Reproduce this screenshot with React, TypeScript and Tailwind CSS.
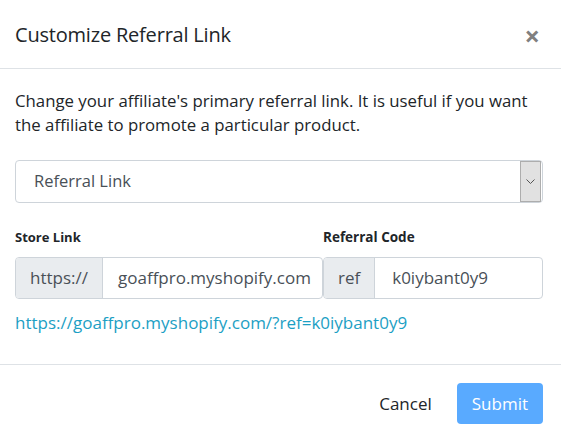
export default function App() {
  return (
    <div className="w-[561px] h-[442px] bg-white text-[#212529] font-['Open_Sans',sans-serif] overflow-hidden">
      {/* header */}
      <div className="flex items-center justify-between h-[69px] pl-[15px] pr-[21px] pt-[2px] border-b border-[#dee2e6]">
        <h5 className="text-[20px] leading-[30px] tracking-[-0.2px]">Customize Referral Link</h5>
        <button className="text-[27px] leading-none font-bold text-[#808080]">×</button>
      </div>

      {/* body */}
      <div className="pl-[15px] pr-[18px] pt-[20px] pb-[29px] border-b border-[#dee2e6]">
        <p className="text-[16.8px] leading-[24px] mb-[23px]">
          Change your affiliate's primary referral link. It is useful if you want the affiliate to promote a particular product.
        </p>

        <div className="flex items-center h-[43px] border border-[#ced4da] rounded-[4px] pl-[18px] pr-[1px]">
          <span className="flex-1 text-[16.5px] text-[#495057]">Referral Link</span>
          <div className="flex items-center justify-center w-[21px] h-[41px] bg-[#e1e1e1] border border-[#adadad]">
            <svg width="9" height="5" viewBox="0 0 9 5" fill="none" stroke="#555" strokeWidth="1">
              <path d="M0.5 0.5 L4.5 4.5 L8.5 0.5" />
            </svg>
          </div>
        </div>

        <div className="grid grid-cols-[308px_220px] mt-[24px]">
          <div>
            <label className="block text-[13px] font-bold leading-[21px] mb-[9px]">Store Link</label>
            <div className="flex h-[42px] border border-[#ced4da] rounded-[4px] overflow-hidden text-[17px]">
              <span className="flex items-center px-[14px] bg-[#e9ecef] border-r border-[#ced4da] text-[#495057]">https://</span>
              <span className="flex items-center pl-[15px] whitespace-nowrap overflow-hidden text-[#495057]">goaffpro.myshopify.com</span>
            </div>
          </div>
          <div>
            <label className="block text-[13.5px] font-bold leading-[21px] mb-[9px]">Referral Code</label>
            <div className="flex h-[42px] border border-[#ced4da] rounded-[4px] overflow-hidden text-[17px]">
              <span className="flex items-center px-[14px] bg-[#e9ecef] border-r border-[#ced4da] text-[#495057]">ref</span>
              <span className="flex items-center pl-[17px] text-[#495057]">k0iybant0y9</span>
            </div>
          </div>
        </div>

        <a className="block mt-[12px] text-[17px] leading-[24px] text-[#1ca0c4]">
          https://goaffpro.myshopify.com/?ref=k0iybant0y9
        </a>
      </div>

      {/* footer */}
      <div className="flex items-center justify-end gap-[13px] pt-[18px] pr-[18px]">
        <button className="px-[12px] h-[41px] text-[17px]">Cancel</button>
        <button className="px-[15px] h-[41px] rounded-[4px] bg-[#59aaff] text-white text-[17px]">Submit</button>
      </div>
    </div>
  );
}
